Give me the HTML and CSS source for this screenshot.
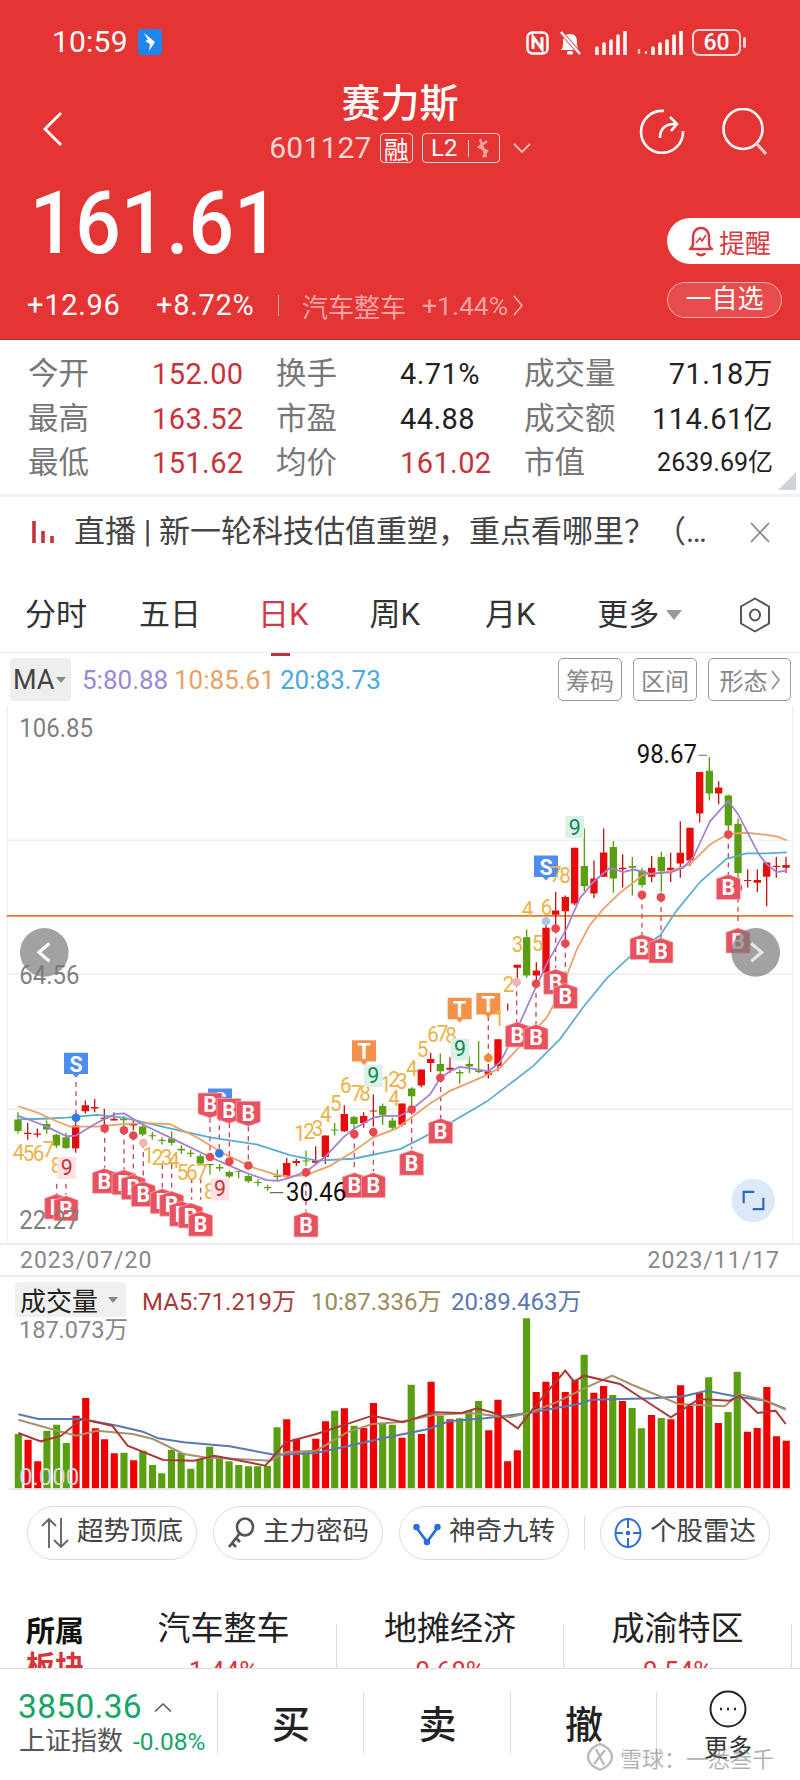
FILE: index.html
```html
<!DOCTYPE html>
<html lang="zh">
<head>
<meta charset="utf-8">
<title>赛力斯</title>
<link rel="stylesheet" href="styles.css">
</head>
<body>
<div class="page">
<header class="hero">
  <div class="status">
    <div class="status-left">
      <span class="clock">10:59</span>
      <svg class="wing" width="24" height="26" viewBox="0 0 24 26"><rect width="24" height="26" rx="4" fill="#1d86ee"/><path d="M6 4l11 9-6 9 1-7-5-3 3-1z" fill="#fff"/></svg>
    </div>
    <div class="status-right">
      <svg width="23" height="24" viewBox="0 0 23 24"><rect x="1.5" y="1.5" width="20" height="21" rx="5" fill="none" stroke="#fff" stroke-width="2.5"/><path d="M7 18V6l9 12V6" fill="none" stroke="#fff" stroke-width="3"/></svg>
      <svg width="23" height="24" viewBox="0 0 23 24"><path d="M3 19c2-2 2-5 2-8 0-5 2-8 7-8s7 3 7 8c0 3 0 6 2 8z" fill="#fff"/><rect x="9" y="20" width="6" height="3.500" rx="1.500" fill="#fff"/><path d="M3 1l19 22" stroke="#e53535" stroke-width="4"/><path d="M3 1l19 22" stroke="#fff" stroke-width="2.500"/></svg>
      <svg class="sig1" width="33" height="24" viewBox="0 0 33 24"><path d="M2 17v6M9 13v10M16 10v13M23 5v18M30 0v23" stroke="#fff" stroke-width="3.6" stroke-linecap="round" opacity=".95"/></svg>
      <svg class="sig2" width="46" height="24" viewBox="0 0 46 24"><path d="M2 18v5M9 20v3" stroke="#f5c4c4" stroke-width="2.4"/><path d="M16 17v6M23 13v10M30 10v13M37 5v18M44 0v23" stroke="#fff" stroke-width="3.6" stroke-linecap="round"/></svg>
      <div class="battery"><span class="batt-box">60</span><span class="batt-nub"></span></div>
    </div>
  </div>
  <div class="nav">
    <svg class="back" width="22" height="36" viewBox="0 0 22 36"><path d="M19 2L3 18l16 16" fill="none" stroke="#fff" stroke-width="2.8"/></svg>
    <div class="nav-center">
      <div class="name">赛力斯</div>
      <div class="code-row">
        <span class="code">601127</span>
        <span class="tag tag-rong">融</span>
        <span class="tag tag-l2">L2<i class="tag-sep"></i><svg width="14" height="20" viewBox="0 0 14 20"><path d="M4 1l6 18M11 3L3 9l8 4-4 6" fill="none" stroke="#f2a3a3" stroke-width="2.4"/></svg></span>
        <svg class="code-caret" width="18" height="11" viewBox="0 0 18 11"><path d="M1 1l8 8 8-8" fill="none" stroke="#f7bcbc" stroke-width="1.8"/></svg>
      </div>
    </div>
    <div class="nav-icons">
      <svg width="46" height="46" viewBox="0 0 46 46"><path d="M25 3A21 21 0 1 0 44 23" fill="none" stroke="#fff" stroke-width="2.6"/><path d="M21 30c0-8 4-14 15-14M31 9l7 7-6 7" fill="none" stroke="#fff" stroke-width="2.6"/></svg>
      <svg width="48" height="48" viewBox="0 0 48 48"><ellipse cx="22" cy="21" rx="19.5" ry="20" fill="none" stroke="#fff" stroke-width="2.6"/><path d="M35 35l10 11" stroke="#f9caca" stroke-width="3"/></svg>
    </div>
  </div>
  <div class="quote">
    <div class="quote-left">
      <div class="price">161.61</div>
      <div class="change-row">
        <span class="chg chg-a">+12.96</span>
        <span class="chg chg-b">+8.72%</span>
        <i class="chg-sep"></i>
        <span class="sector">汽车整车</span>
        <span class="sector-pct">+1.44%</span>
        <svg width="10" height="21" viewBox="0 0 10 21"><path d="M1 1l8 9.5L1 20" fill="none" stroke="#f7bcbc" stroke-width="1.6"/></svg>
      </div>
    </div>
    <div class="quote-right">
      <div class="remind">
        <svg width="26" height="36" viewBox="0 0 26 36"><path d="M2 26c2-1 3-3 3-6v-6c0-5 3-9 8-9s8 4 8 9v6c0 3 1 5 3 6z" fill="none" stroke="#d83a40" stroke-width="2.4" stroke-linejoin="round"/><path d="M9 30c1 3 7 3 8 0" fill="none" stroke="#d83a40" stroke-width="2.4"/><path d="M8 20l4-5 2 3 4-6" fill="none" stroke="#d83a40" stroke-width="1.6"/></svg>
        <span>提醒</span>
      </div>
      <div class="watch">一自选</div>
    </div>
  </div>
</header>

<section class="stats">
  <span class="lbl">今开</span><span class="val up">152.00</span><span class="lbl">换手</span><span class="val">4.71%</span><span class="lbl">成交量</span><span class="val end">71.18万</span>
  <span class="lbl">最高</span><span class="val up">163.52</span><span class="lbl">市盈</span><span class="val">44.88</span><span class="lbl">成交额</span><span class="val end">114.61亿</span>
  <span class="lbl">最低</span><span class="val up">151.62</span><span class="lbl">均价</span><span class="val up">161.02</span><span class="lbl">市值</span><span class="val end small">2639.69亿</span>
  <i class="corner"></i>
</section>

<section class="notice">
  <svg width="24" height="26" viewBox="0 0 24 26"><path d="M2 2v22M11 12v12M20 17v7" stroke="#c4343c" stroke-width="3.6"/></svg>
  <span class="notice-text">直播 | 新一轮科技估值重塑，重点看哪里？（…</span>
  <svg class="notice-x" width="20" height="21" viewBox="0 0 20 21"><path d="M1 1l18 19M19 1L1 20" stroke="#8a8a8a" stroke-width="1.8"/></svg>
</section>

<nav class="tabs">
  <span class="tab t1">分时</span>
  <span class="tab t2">五日</span>
  <span class="tab t3 active">日K</span>
  <span class="tab t4">周K</span>
  <span class="tab t5">月K</span>
  <span class="tab t6">更多<i class="caret"></i></span>
  <svg class="hex" width="32" height="36" viewBox="0 0 32 36"><path d="M16 1.5l14 8v17l-14 8-14-8v-17z" fill="none" stroke="#555" stroke-width="2" stroke-linejoin="round"/><ellipse cx="16" cy="18" rx="5" ry="5.5" fill="none" stroke="#555" stroke-width="2"/></svg>
</nav>

<div class="ma-bar">
  <span class="ma-box">MA<i class="caret-sm"></i></span>
  <span class="ma5">5:80.88</span>
  <span class="ma10">10:85.61</span>
  <span class="ma20">20:83.73</span>
  <span class="ma-tools">
    <span class="tool">筹码</span><span class="tool">区间</span><span class="tool tool-w">形态<svg width="9" height="20" viewBox="0 0 9 20"><path d="M1 1l7 9-7 9" fill="none" stroke="#888" stroke-width="1.5"/></svg></span>
  </span>
</div>

<section class="kline">
<svg class="kline-svg" width="800" height="537" viewBox="0 17 2400 1504" preserveAspectRatio="none">
  <defs>
    <g id="bU"><path d="M-36 -24L0 -36L36 -24V34H-36z" fill="#e8525f" stroke="#f7b8bc" stroke-width="2"/><text y="22" class="bt">B</text></g>
    <g id="bD"><path d="M-36 -34H36V24L0 36L-36 24z" fill="#e8525f" stroke="#f7b8bc" stroke-width="2"/><text y="20" class="bt">B</text></g>
    <g id="sD"><path d="M-36 -34H36V26H10L0 36L-10 26H-36z" fill="#4d8df0"/><text y="20" class="bt">S</text></g>
    <g id="tD"><path d="M-36 -34H36V26H10L0 36L-10 26H-36z" fill="#f5924a"/><text y="20" class="bt">T</text></g>
  </defs>
  <rect x="22" y="17" width="2356" height="1503" fill="#fff"/>
  <path d="M22 393H2378M22 768H2378M22 1146H2378" stroke="#eaeaea" stroke-width="3"/>
  <path d="M22 17V1520M2378 17V1520" stroke="#ececec" stroke-width="3"/>
  <path d="M20 605H2380" stroke="#e8752a" stroke-width="5"/>

  <text x="58" y="104" class="axis">106.85</text>
  <text x="1910" y="178" class="ext">98.67</text>
  <path d="M2095 155h26" stroke="#777" stroke-width="3"/>

  <g fill="none" stroke="#c8485a" stroke-width="4" stroke-dasharray="14 12">
    <path d="M170 1355v30M198 1355v30M228 1070v100M314 1200v110M372 1205v110M400 1220v110M430 1240v110M487 1300v70M515 1300v70M575 1340v60M602 1340v60M630 1170v110M658 1165v105M688 1185v108M745 1195v110M918 1323v110M1063 1216v105M1120 1210v110M1235 1147v110M1322 1058v115M1465 1003v-130M1550 790v115M1608 795v115M1667 640v110M1696 682v110M1926 546v115M1983 553v115M2185 377v115M2214 527v105"/>
  </g>

  <path fill="none" stroke="#c01818" stroke-width="4" d="M83 1185V1232M112 1200V1225M256 1122V1158M284 1118V1155M313 1145V1190M342 1155V1178M400 1178V1205M860 1283V1340M889 1285V1305M947 1250V1300M976 1220V1300M1033 1135V1210M1091 1155V1198M1120 1105V1195M1206 1130V1195M1264 1035V1085M1292 988V1042M1350 1000V1045M1465 1020V1060M1494 950V1040M1523 850V870M1552 742V790M1609 735V800M1638 610V770M1667 537V640M1696 548V680M1724 414V575M1782 450V555M1811 360V495M1868 432V525M1955 437V510M2012 428V510M2041 340V498M2070 358V465M2099 202V343M2156 228V292M2243 475V525M2272 475V538M2300 455V578M2329 440V498M2358 440V485"/>
  <path fill="none" stroke="#e80c0c" stroke-width="22" d="M83 1212V1216M112 1214V1218M256 1135V1152M284 1140V1144M313 1170V1174M342 1173V1178M400 1188V1192M860 1297V1335M889 1291V1297M947 1290V1296M976 1220V1280M1033 1160V1208M1091 1165V1185M1120 1150V1153M1206 1130V1190M1264 1035V1080M1292 1006V1017M1350 1030V1036M1465 1040V1050M1494 950V1025M1552 742V750M1609 758V772M1638 638V765M1667 590V602M1696 552V592M1724 414V570M1782 500V542M1811 427V495M1868 470V474M1955 470V495M2012 470V477M2041 428V458M2070 358V450M2099 202V318M2156 245V262M2243 504V507M2272 504V512M2300 455V495M2329 465V468M2358 462V470"/>
  <path fill="none" stroke="#e80c0c" stroke-width="22" d="M227 1192V1256"/>
  <path fill="none" stroke="#c01818" stroke-width="4" d="M227 1180V1268"/>
  <path fill="none" stroke="#5a9f12" stroke-width="4" d="M54 1155V1215M140 1178V1215M169 1215V1255M198 1212V1258M371 1165V1195M428 1190V1222M457 1210V1232M486 1225V1245M515 1208V1248M544 1247V1272M572 1260V1280M601 1272V1302M630 1300V1330M659 1300V1320M688 1318V1340M716 1318V1340M745 1330V1352M774 1342V1362M803 1358V1375M832 1315V1345M918 1262V1305M1004 1185V1220M1062 1165V1200M1148 1130V1190M1177 1170V1205M1235 1085V1145M1321 990V1065M1379 1035V1075M1408 998V1045M1436 955V1045M1580 643V778M1753 360V535M1840 395V540M1897 440V548M1926 470V525M1984 425V537M2128 160V282M2185 265V370M2214 332V510"/>
  <path fill="none" stroke="#5a9f12" stroke-width="22" d="M54 1175V1207M140 1188V1203M169 1218V1248M198 1225V1255M371 1172V1177M428 1195V1217M457 1219V1222M486 1232V1235M515 1228V1240M544 1257V1262M572 1268V1272M601 1278V1298M630 1300V1303M659 1308V1312M688 1322V1335M716 1320V1322M745 1333V1348M774 1350V1353M803 1364V1368M832 1332V1336M918 1290V1293M1004 1203V1206M1062 1168V1188M1148 1137V1162M1177 1178V1198M1235 1088V1110M1321 1020V1040M1379 1042V1046M1408 1020V1027M1436 1038V1042M1580 665V772M1753 465V522M1840 412V500M1897 465V470M1926 478V518M1984 440V480M2128 198V262M2185 268V352M2214 347V485"/>

  <polyline fill="none" stroke="#5aaccc" stroke-width="5" points="54,1175 130,1173 200,1170 290,1162 370,1170 510,1200 630,1225 770,1245 870,1275 950,1290 1060,1285 1200,1258 1260,1230 1350,1185 1460,1125 1600,1025 1680,950 1750,860 1820,780 1900,710 1980,660 2030,590 2100,510 2180,445 2240,430 2300,430 2360,427"/>
  <polyline fill="none" stroke="#eb9f69" stroke-width="5" points="54,1138 110,1155 170,1180 210,1195 290,1195 370,1188 440,1185 510,1188 590,1225 680,1275 760,1310 830,1330 870,1335 920,1330 990,1305 1060,1265 1120,1225 1190,1200 1290,1130 1350,1095 1450,1055 1500,1030 1570,960 1640,890 1680,820 1730,700 1770,630 1810,585 1860,540 1930,490 2010,480 2070,460 2130,405 2185,375 2240,372 2300,378 2330,382 2360,393"/>
  <polyline fill="none" stroke="#a27fd0" stroke-width="5" points="54,1165 100,1180 140,1195 200,1222 228,1220 290,1185 345,1160 372,1158 430,1190 520,1230 630,1280 690,1305 740,1325 800,1345 835,1347 870,1338 920,1320 975,1280 1030,1225 1063,1200 1120,1170 1150,1165 1200,1165 1235,1147 1290,1105 1320,1060 1350,1040 1380,1028 1430,1035 1465,1040 1500,1015 1550,925 1600,820 1640,740 1700,640 1740,555 1780,510 1830,470 1870,482 1900,475 1955,487 2015,482 2050,470 2080,440 2130,340 2185,283 2214,320 2245,375 2275,430 2300,460 2330,482 2360,478"/>

  <g fill="#e84850">
    <ellipse cx="314" cy="1200" rx="13" ry="12"/><ellipse cx="372" cy="1205" rx="13" ry="12"/><ellipse cx="400" cy="1220" rx="13" ry="12"/><ellipse cx="630" cy="1280" rx="13" ry="12"/><ellipse cx="688" cy="1293" rx="13" ry="12"/><ellipse cx="745" cy="1304" rx="13" ry="12"/><ellipse cx="918" cy="1323" rx="13" ry="12"/><ellipse cx="1063" cy="1216" rx="13" ry="12"/><ellipse cx="1120" cy="1210" rx="13" ry="12"/><ellipse cx="1235" cy="1147" rx="13" ry="12"/><ellipse cx="1321" cy="1058" rx="13" ry="12"/><ellipse cx="1608" cy="795" rx="13" ry="12"/><ellipse cx="1667" cy="640" rx="13" ry="12"/><ellipse cx="1696" cy="682" rx="13" ry="12"/><ellipse cx="1926" cy="546" rx="13" ry="12"/><ellipse cx="1983" cy="553" rx="13" ry="12"/><ellipse cx="2185" cy="377" rx="13" ry="12"/><ellipse cx="2214" cy="527" rx="13" ry="12"/>
  </g>
  <ellipse cx="228" cy="1170" rx="13" ry="12" fill="#2f7ae5"/><ellipse cx="658" cy="1270" rx="13" ry="12" fill="#2f7ae5"/><ellipse cx="1465" cy="1003" rx="13" ry="12" fill="#f58a30"/><ellipse cx="1550" cy="790" rx="13" ry="12" fill="#f2b6b0"/><ellipse cx="430" cy="1240" rx="13" ry="12" fill="#f2b6b0"/><ellipse cx="1638" cy="620" rx="13" ry="12" fill="#a9c8ea"/>

  <use href="#sD" x="228" y="1022"/><use href="#sD" x="660" y="1122"/><use href="#sD" x="1638" y="470"/>
  <use href="#tD" x="1092" y="987"/><use href="#tD" x="1379" y="868"/><use href="#tD" x="1465" y="855"/>
  <use href="#bD" x="630" y="1135"/><use href="#bD" x="687" y="1150"/><use href="#bD" x="745" y="1158"/>
  <use href="#bU" x="170" y="1420"/><use href="#bU" x="198" y="1425"/>
  <use href="#bU" x="313" y="1348"/><use href="#bU" x="372" y="1352"/><use href="#bU" x="400" y="1365"/><use href="#bU" x="430" y="1385"/><use href="#bU" x="487" y="1405"/><use href="#bU" x="515" y="1412"/><use href="#bU" x="545" y="1440"/><use href="#bU" x="572" y="1445"/><use href="#bU" x="602" y="1468"/>
  <use href="#bU" x="918" y="1470"/><use href="#bU" x="1063" y="1360"/><use href="#bU" x="1120" y="1360"/>
  <use href="#bU" x="1235" y="1297"/><use href="#bU" x="1322" y="1208"/><use href="#bU" x="1552" y="938"/><use href="#bU" x="1608" y="945"/><use href="#bU" x="1667" y="790"/><use href="#bU" x="1696" y="830"/><use href="#bU" x="1926" y="693"/><use href="#bU" x="1983" y="703"/><use href="#bU" x="2185" y="525"/><use href="#bU" x="2214" y="675"/>

  <g class="seq">
    <text x="38" y="1288">4</text><text x="68" y="1292">5</text><text x="98" y="1292">6</text><text x="128" y="1280">7</text><text x="152" y="1325">8</text>
    <text x="428" y="1298">1</text><text x="455" y="1302">2</text><text x="482" y="1302">3</text><text x="505" y="1310">4</text><text x="530" y="1345">5</text><text x="558" y="1345">6</text><text x="588" y="1345">7</text><text x="612" y="1398">8</text>
    <text x="882" y="1235">1</text><text x="910" y="1230">2</text><text x="935" y="1222">3</text><text x="960" y="1182">4</text><text x="990" y="1150">5</text><text x="1020" y="1100">6</text><text x="1052" y="1122">7</text><text x="1078" y="1122">8</text>
    <text x="1140" y="1098">1</text><text x="1165" y="1085">2</text><text x="1188" y="1090">3</text><text x="1165" y="1138">4</text><text x="1218" y="1052">4</text><text x="1250" y="1000">5</text><text x="1282" y="958">6</text><text x="1310" y="955">7</text><text x="1336" y="962">8</text>
    <text x="1480" y="912">1</text><text x="1508" y="818">2</text><text x="1535" y="705">3</text><text x="1565" y="608">4</text><text x="1595" y="703">5</text><text x="1622" y="603">6</text><text x="1650" y="510">7</text><text x="1678" y="512">8</text>
  </g>
  <g class="nine">
    <rect x="172" y="1280" width="56" height="62" fill="#fbe3e3"/><text x="182" y="1330" fill="#c8323c">9</text>
    <rect x="632" y="1340" width="56" height="62" fill="#fbe3e3"/><text x="642" y="1390" fill="#c8323c">9</text>
    <rect x="1092" y="1022" width="56" height="62" fill="#ddf0e6"/><text x="1102" y="1072" fill="#0e8a58">9</text>
    <rect x="1352" y="948" width="56" height="62" fill="#ddf0e6"/><text x="1362" y="998" fill="#0e8a58">9</text>
    <rect x="1696" y="325" width="56" height="62" fill="#ddf0e6"/><text x="1706" y="377" fill="#0e8a58">9</text>
  </g>

  <path d="M810 1380h40" stroke="#555" stroke-width="3"/>
  <text x="858" y="1402" class="ext">30.46</text>
  <text x="58" y="796" class="axis">64.56</text>
  <text x="58" y="1482" class="axis">22.27</text>

  <ellipse cx="133" cy="707" rx="73" ry="68" fill="#7a7a7a" opacity=".7"/>
  <path d="M148 682L117 707l31 25" fill="none" stroke="#fff" stroke-width="9"/>
  <ellipse cx="2267" cy="707" rx="73" ry="68" fill="#7a7a7a" opacity=".7"/>
  <path d="M2254 682l31 25-31 25" fill="none" stroke="#e8e8e8" stroke-width="9"/>
  <ellipse cx="2260" cy="1402" rx="65" ry="61" fill="#dde8f8"/>
  <path d="M2263 1378h-32v32M2258 1426h32v-32" fill="none" stroke="#2f66b8" stroke-width="6.5"/>
</svg>
</section>

<div class="dates"><span>2023/07/20</span><span>2023/11/17</span></div>

<section class="volume">
  <div class="vol-head">
    <span class="vol-box">成交量<i class="caret-sm"></i></span>
    <span class="vma5">MA5:71.219万</span>
    <span class="vma10">10:87.336万</span>
    <span class="vma20">20:89.463万</span>
  </div>
  <div class="vol-max">187.073万</div>
  <svg class="vol-svg" width="800" height="213" viewBox="0 54 1568 639" preserveAspectRatio="none">
    <path fill="none" stroke="#f00000" stroke-width="14" d="M55 688V542M74 688V607M149 688V470M168 688V417M187 688V508M205 688V541M224 688V583M262 688V604M562 688V481M581 688V539M619 688V539M638 688V487M675 688V448M713 688V507M732 688V432M788 688V536M826 688V525M845 688V368M882 688V481M958 688V514M976 688V422M995 688V607M1014 688V574M1051 688V399M1070 688V368M1089 688V339M1108 688V399M1127 688V362M1164 688V401M1183 688V381M1220 688V426M1277 688V468M1315 688V481M1334 688V379M1352 688V440M1371 688V401M1408 688V492M1465 688V518M1484 688V507M1503 688V384M1522 688V532M1541 688V545"/>
    <path fill="none" stroke="#5a9f12" stroke-width="14" d="M36 688V525M92 688V515M111 688V497M130 688V552M243 688V581M280 688V575M299 688V618M317 688V643M336 688V572M355 688V582M374 688V629M392 688V600M411 688V563M430 688V595M449 688V607M468 688V618M487 688V622M505 688V622M524 688V620M543 688V505M600 688V580M656 688V455M694 688V500M750 688V495M769 688V497M806 688V377M863 688V470M901 688V478M919 688V455M938 688V426M1032 688V178M1145 688V287M1201 688V408M1239 688V447M1257 688V508M1296 688V477M1389 688V355M1427 688V459M1445 688V338"/>
    <path d="M15 691H1553" stroke="#e4e4e4" stroke-width="5"/>
    <polyline fill="none" class="vl" stroke="#5a78b0" points="36,466 75,480 160,480 230,500 280,518 310,538 360,550 450,562 540,588 620,582 680,562 760,535 840,510 880,487 950,478 1035,462 1135,435 1160,422 1280,418 1340,412 1385,395 1440,412 1500,425 1540,450"/>
    <polyline fill="none" class="vl" stroke="#a8926a" points="36,482 100,510 150,530 190,515 260,525 300,540 360,585 400,595 530,605 560,580 620,575 680,520 730,495 780,490 850,468 920,462 1000,475 1040,460 1090,430 1140,392 1200,350 1240,378 1330,435 1420,442 1450,405 1500,425 1540,452"/>
    <polyline fill="none" class="vl" stroke="#a83a3a" points="36,522 80,547 120,530 160,480 220,500 250,560 320,603 380,605 420,590 520,620 560,550 620,525 690,490 730,470 790,490 850,460 905,462 935,448 975,465 1015,508 1050,440 1108,335 1125,368 1145,350 1215,375 1260,420 1315,475 1370,420 1430,425 1450,410 1485,462 1520,455 1540,495"/>
  </svg>
  <span class="vol-zero">0.000</span>
</section>

<section class="chips">
  <span class="chip"><svg width="28" height="34" viewBox="0 0 28 34"><path d="M8 32V3M1 10l7-7 7 7M20 2v29M13 24l7 7 7-7" fill="none" stroke="#666" stroke-width="1.9"/></svg><span class="chip-t">超势顶底</span></span>
  <span class="chip"><svg width="28" height="34" viewBox="0 0 28 34"><ellipse cx="18" cy="11" rx="8" ry="8.5" fill="none" stroke="#555" stroke-width="2.6"/><path d="M13 17L2 31M5 27l4 4M9 22l4 4" fill="none" stroke="#555" stroke-width="2.6"/></svg><span class="chip-t">主力密码</span></span>
  <span class="chip"><svg width="28" height="34" viewBox="0 0 28 34"><path d="M3 11l11 15 11-15" fill="none" stroke="#2d6fd6" stroke-width="2.8"/><circle cx="3.5" cy="11" r="3.3" fill="#2d6fd6"/><circle cx="24.5" cy="11" r="3.3" fill="#2d6fd6"/><circle cx="14" cy="26" r="3.3" fill="#2d6fd6"/></svg><span class="chip-t">神奇九转</span></span>
  <i class="chip-sep"></i>
  <span class="chip"><svg width="28" height="34" viewBox="0 0 28 34"><ellipse cx="14" cy="17" rx="12.5" ry="14" fill="none" stroke="#2d6fd6" stroke-width="2"/><path d="M14 3v9M14 22v9M1 17h8M19 17h8" stroke="#2d6fd6" stroke-width="2"/><circle cx="14" cy="17" r="2.3" fill="#2d6fd6"/></svg><span class="chip-t">个股雷达</span></span>
</section>

<section class="concepts">
  <div class="con-head"><b>所属</b><b class="hot">板块</b></div>
  <div class="con con-first"><span class="con-name">汽车整车</span><span class="con-pct">1.44%</span></div>
  <div class="con"><span class="con-name">地摊经济</span><span class="con-pct">0.68%</span></div>
  <div class="con"><span class="con-name">成渝特区</span><span class="con-pct">0.54%</span></div>
</section>

<footer class="bottom">
  <div class="index">
    <div class="idx-top"><span class="idx-val">3850.36</span><svg width="18" height="9" viewBox="0 0 18 9"><path d="M1 8.5L9 1l8 7.5" fill="none" stroke="#555" stroke-width="1.5"/></svg></div>
    <div class="idx-bot"><span class="idx-name">上证指数</span><span class="idx-pct">-0.08%</span></div>
  </div>
  <div class="act">买</div>
  <div class="act">卖</div>
  <div class="act">撤</div>
  <div class="more">
    <svg width="38" height="38" viewBox="0 0 38 38"><ellipse cx="19" cy="19" rx="17.5" ry="17.5" fill="none" stroke="#222" stroke-width="2"/><path d="M11 19h2M18 19h2M25 19h2" stroke="#222" stroke-width="2.6"/></svg>
    <span>更多</span>
  </div>
  <div class="mark">
    <svg width="26" height="28" viewBox="0 0 26 28"><path d="M13 1C6 3 1 9 1 14s5 10 12 13c7-3 12-8 12-13S20 3 13 1zM9 6l8 16M18 7L7 21" fill="none" stroke="#bbb" stroke-width="2.4"/></svg>
    <span>雪球：一悉叁千</span>
  </div>
</footer>
</div>
</body>
</html>
```
FILE: styles.css
```css
* { box-sizing: border-box; }
html, body { margin: 0; padding: 0; background: #fff; }
body { font-family: Roboto, "Noto Sans CJK SC", sans-serif; color: #222; }
i { display: block; font-style: normal; }
svg { display: block; flex: none; }
.page { width: 800px; height: 1780px; overflow: hidden; display: flex; flex-direction: column; }
.up { color: #c83238; }

/* hero */
.hero { height: 340px; background: #e53434; color: #fff; border-bottom: 1px solid #a33; flex: none; display: flex; flex-direction: column; }
.status { height: 84px; padding: 28px 54px 0 52px; display: flex; justify-content: space-between; align-items: flex-start; }
.status-left { display: flex; align-items: center; gap: 10px; }
.clock { font-size: 30px; line-height: 28px; letter-spacing: .2px; }
.status-right { display: flex; align-items: center; gap: 9px; padding-top: 1px; }
.sig1 { margin-left: 5px; }
.battery { display: flex; align-items: center; gap: 2px; }
.batt-box { width: 49px; height: 27px; border: 2px solid #f9d0d0; border-radius: 7px; font-size: 23px; line-height: 23px; text-align: center; font-weight: 500; }
.batt-nub { width: 3px; height: 11px; background: #f9d0d0; border-radius: 2px; }

.nav { height: 84px; padding: 0 31px; display: grid; grid-template-columns: 1fr auto 1fr; align-items: start; }
.back { margin: 27px 0 0 11px; }
.nav-center { display: flex; flex-direction: column; align-items: center; }
.name { font-size: 39px; line-height: 44px; font-weight: 500; margin-top: -2px; }
.code-row { display: flex; align-items: center; gap: 8px; height: 34px; margin-top: 5px; color: #fbd4d4; }
.code { font-size: 30px; line-height: 34px; letter-spacing: .2px; }
.tag { border: 1.5px solid #fbd4d4; border-radius: 4px; height: 30px; display: flex; align-items: center; justify-content: center; color: #fff; }
.tag-rong { width: 33px; font-size: 25px; }
.tag-l2 { width: 78px; font-size: 24px; gap: 7px; margin-left: 1px; }
.tag-sep { width: 1px; height: 17px; background: #fbd4d4; margin-left: 4px; }
.code-caret { margin-left: 5px; }
.nav-icons { display: flex; justify-content: flex-end; gap: 36px; margin-top: 24px; }

.quote { flex: 1; display: flex; justify-content: space-between; }
.quote-left { padding: 18px 0 0 27px; }
.price { font-size: 88px; line-height: 74px; font-weight: 500; padding-left: 3px; transform: scaleX(.91); transform-origin: left center; }
.change-row { display: flex; align-items: center; margin-top: 30px; height: 30px; }
.chg { font-size: 29px; letter-spacing: .7px; }
.chg-a { width: 129px; }
.chg-b { width: 122px; }
.chg-sep { width: 1px; height: 21px; background: #f09a9a; margin-right: 23px; }
.sector { font-size: 26px; color: #f3a3a3; width: 120px; }
.sector-pct { font-size: 26.5px; color: #f3a3a3; width: 91px; }
.quote-right { display: flex; flex-direction: column; align-items: flex-start; padding-top: 50px; gap: 18px; width: 133px; }
.remind { width: 133px; height: 46px; background: #fff; border-radius: 23px 0 0 23px; color: #d83a40; font-size: 26px; display: flex; align-items: center; gap: 5px; padding-left: 21px; }
.watch { width: 115px; height: 36px; border: 1.5px solid #f5b0b0; border-radius: 18px; background: #e94c4c; font-size: 26px; line-height: 32px; text-align: center; }

/* stats */
.stats { position: relative; height: 157px; flex: none; padding: 12px 27px 0 28px; display: grid; grid-template-columns: 124px 124px 124px 124px 100px 1fr; grid-template-rows: repeat(3, 44.5px); border-bottom: 3px solid #f1f1f1; align-items: center; }
.lbl { font-size: 30.5px; color: #777; line-height: 34px; white-space: nowrap; }
.val { font-size: 29px; line-height: 34px; color: #222; white-space: nowrap; letter-spacing: .4px; }
.val.up { color: #c83238; }
.val.end { justify-self: end; }
.val.small { font-size: 25px; letter-spacing: 0; }
.corner { position: absolute; right: 4px; bottom: 4px; width: 0; height: 0; border-style: solid; border-width: 0 0 18px 18px; border-color: transparent transparent #ced3d8 transparent; }

/* notice */
.notice { height: 70px; flex: none; display: flex; align-items: center; padding: 0 30px 0 32px; gap: 18px; }
.notice-text { font-size: 31px; color: #444; line-height: 36px; white-space: nowrap; flex: 1; }
.notice-x { margin-left: auto; }

/* tabs */
.tabs { height: 86px; flex: none; display: flex; align-items: flex-start; border-bottom: 1.5px solid #e9e9e9; position: relative; padding-top: 30px; }
.tab { font-size: 31px; line-height: 36px; color: #333; display: flex; align-items: center; position: relative; white-space: nowrap; }
.t1 { margin-left: 25px; }
.t2 { margin-left: 52px; }
.t3 { margin-left: 57px; }
.t4 { margin-left: 61px; }
.t5 { margin-left: 65px; }
.t6 { margin-left: 62px; }
.active { color: #d23a42; }
.active::after { content: ""; position: absolute; left: 13px; right: 18px; bottom: -23px; height: 3px; background: #b8323c; }
.caret { width: 0; height: 0; border-style: solid; border-width: 10px 8px 0 8px; border-color: #999 transparent transparent transparent; margin-left: 7px; }
.hex { margin: 0 0 0 57px; }

/* ma bar */
.ma-bar { height: 53px; flex: none; display: flex; align-items: center; padding: 0 9px 0 10px; font-size: 26px; white-space: nowrap; }
.ma-box { width: 61px; height: 43px; background: #eee; border-radius: 4px; display: flex; align-items: center; padding-left: 3px; color: #444; font-size: 27px; }
.caret-sm { width: 0; height: 0; border-style: solid; border-width: 6px 5px 0 5px; border-color: #888 transparent transparent transparent; margin-left: 2px; }
.ma5 { color: #9a88d6; margin-left: 11px; width: 92px; }
.ma10 { color: #e9a263; width: 106px; }
.ma20 { color: #4aa9da; }
.ma-tools { margin-left: auto; display: flex; gap: 11px; }
.tool { width: 64px; height: 43px; border: 1.5px solid #999; border-radius: 5px; color: #888; font-size: 24px; display: flex; align-items: center; justify-content: center; }
.tool-w { width: 83px; gap: 3px; }

/* kline */
.kline { height: 537px; flex: none; }
.kline-svg text { font-family: Roboto, sans-serif; }
.axis { font-size: 72px; fill: #808080; }
.ext { font-size: 72px; fill: #111; }
.bt { font-size: 64px; font-weight: 700; fill: #fff; text-anchor: middle; }
.seq text { font-size: 62px; fill: #ecb24a; }
.nine text { font-size: 64px; }

.dates { height: 34px; flex: none; display: flex; justify-content: space-between; align-items: center; padding: 0 20px; font-size: 23px; color: #888; border-top: 2px solid #ececec; border-bottom: 2px solid #ececec; letter-spacing: 1px; }

/* volume */
.volume { position: relative; height: 213px; flex: none; }
.vol-svg { position: absolute; left: 0; top: 0; }
.vl { stroke-width: 2; vector-effect: non-scaling-stroke; }
.vol-head { position: relative; z-index: 1; padding: 5px 0 0 15px; display: flex; align-items: center; font-size: 24px; white-space: nowrap; }
.vol-box { width: 111px; height: 35px; background: #f0f0f0; border-radius: 4px; display: flex; align-items: center; padding-left: 5px; font-size: 26px; color: #222; }
.vol-box .caret-sm { margin-left: 10px; }
.vma5 { color: #a83a3a; margin-left: 16px; width: 169px; }
.vma10 { color: #9b8a5a; width: 140px; }
.vma20 { color: #5a78b0; }
.vol-max { position: relative; z-index: 1; padding: 1px 0 0 19px; font-size: 23.5px; line-height: 24px; color: #888; white-space: nowrap; }
.vol-zero { position: absolute; left: 19px; top: 188px; font-size: 24px; line-height: 24px; color: #d8d8d8; }

/* chips */
.chips { height: 87px; flex: none; display: flex; align-items: flex-start; padding: 16px 0 0 27px; }
.chip { width: 170px; height: 54px; border: 1.5px solid #ddd; border-radius: 27px; margin-right: 16px; display: flex; align-items: center; justify-content: center; gap: 8px; color: #444; }
.chip-t { font-size: 26.5px; line-height: 30px; padding-bottom: 4px; white-space: nowrap; }
.chip-sep { width: 1px; height: 34px; background: #ddd; margin: 10px 15px 0 -1px; }

/* concepts */
.concepts { height: 91px; flex: none; overflow: hidden; display: grid; grid-template-columns: 90px 221px 227px 228px; padding: 47px 0 0 26px; align-items: start; }
.con-head { display: flex; flex-direction: column; font-size: 29px; line-height: 35px; color: #111; margin-top: -9px; }
.hot { color: #d8343c; }
.con { height: 80px; display: flex; flex-direction: column; align-items: center; border-right: 1.5px solid #ddd; }
.con-first { padding-right: 5px; }
.con-name { font-size: 33px; line-height: 38px; color: #222; margin-top: -14px; white-space: nowrap; }
.con-pct { font-size: 26px; line-height: 30px; color: #d8343c; margin-top: 8px; }

/* bottom */
.bottom { position: relative; flex: 1; border-top: 1.5px solid #dedede; display: grid; grid-template-columns: 218px 146px 147px 146px 1fr; padding-top: 23px; background: #fff; }
.index { padding-left: 19px; height: 62px; border-right: 1.5px solid #ddd; }
.idx-top { display: flex; align-items: center; gap: 12px; height: 30px; }
.idx-val { font-size: 33.5px; line-height: 30px; color: #17a566; letter-spacing: .3px; margin-left: -1px; }
.idx-bot { display: flex; align-items: baseline; gap: 10px; margin-top: 4px; }
.idx-name { font-size: 26px; line-height: 30px; color: #555; }
.idx-pct { font-size: 24.5px; color: #17a566; }
.act { height: 58px; font-size: 38px; font-weight: 500; color: #222; display: flex; align-items: center; justify-content: center; position: relative; }
.act::after { content: ""; position: absolute; right: 0; top: 0; width: 1.5px; height: 62px; background: #ddd; }
.more { display: flex; flex-direction: column; align-items: center; margin-top: -2px; font-size: 24px; color: #333; padding-right: 1px; }
.more span { line-height: 30px; margin-top: 5px; }
.mark { position: absolute; left: 587px; top: 72px; display: flex; align-items: center; gap: 7px; font-size: 22px; color: rgba(110,110,110,.55); }
```
